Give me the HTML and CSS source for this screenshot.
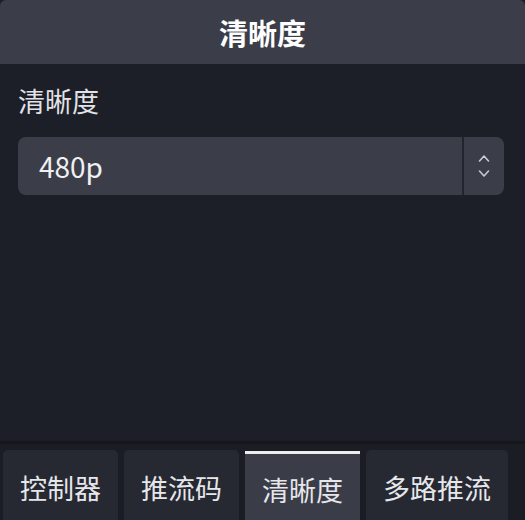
FILE: index.html
```html
<!DOCTYPE html>
<html lang="zh-CN">
<head>
  <meta charset="UTF-8" />
  <meta name="viewport" content="width=device-width, initial-scale=1.0"/>
  <title>清晰度</title>
  <link rel="stylesheet" href="styles.css">
</head>
<body>
  <div class="panel">
    <div class="panel-header">清晰度</div>

    <div class="panel-body">
      <div class="field-label">清晰度</div>
      <div class="select-box">
        <span class="select-value">480p</span>
        <span class="select-arrows">
          <svg width="12" height="26" viewBox="0 0 12 26">
            <polyline points="1.5,8 6,3 10.5,8" fill="none" stroke="#c9cbd2" stroke-width="1.6" stroke-linecap="round" stroke-linejoin="round"/>
            <polyline points="1.5,18 6,23 10.5,18" fill="none" stroke="#c9cbd2" stroke-width="1.6" stroke-linecap="round" stroke-linejoin="round"/>
          </svg>
        </span>
      </div>
    </div>

    <div class="tab-bar">
      <div class="tab">控制器</div>
      <div class="tab">推流码</div>
      <div class="tab active">清晰度</div>
      <div class="tab">多路推流</div>
    </div>
  </div>
</body>
</html>
```

FILE: styles.css
```css
body {
  margin: 0;
  background: #1d1f28;
  font-family: "Noto Sans CJK SC", "Noto Sans", sans-serif;
  color: #e4e5e9;
}

.panel {
  width: 525px;
  height: 520px;
  display: flex;
  flex-direction: column;
  overflow: hidden;
}

.panel-header {
  height: 64px;
  flex-shrink: 0;
  background: #3b3e48;
  border-radius: 6px 6px 0 0;
  display: flex;
  align-items: center;
  justify-content: center;
  font-size: 29px;
  font-weight: 700;
  color: #ffffff;
}

.panel-body {
  flex: 1;
  padding: 21px 21px 0 18px;
}

.field-label {
  font-size: 27px;
  line-height: 31px;
  color: #e2e3e7;
  margin-bottom: 21px;
}

.select-box {
  height: 58px;
  background: #3b3e48;
  border-radius: 8px;
  display: flex;
  align-items: stretch;
}

.select-value {
  flex: 1;
  display: flex;
  align-items: center;
  padding-left: 21px;
  font-size: 28px;
  color: #f0f0f2;
}

.select-arrows {
  width: 40px;
  border-left: 2px solid #23252d;
  display: flex;
  align-items: center;
  justify-content: center;
}

.tab-bar {
  height: 79px;
  flex-shrink: 0;
  box-sizing: border-box;
  border-top: 3px solid #16171d;
  background: #1b1d25;
  padding: 6px 3px 0;
  display: flex;
  gap: 6px;
}

.tab {
  padding: 0 17px;
  background: #262832;
  border-radius: 5px 5px 0 0;
  display: flex;
  align-items: center;
  font-size: 27px;
  color: #e6e7ea;
  margin-bottom: -4px;
}

.tab.active {
  background: #3a3d47;
  border-top: 3px solid #ececec;
  margin-top: 1px;
  border-radius: 0;
}
```
